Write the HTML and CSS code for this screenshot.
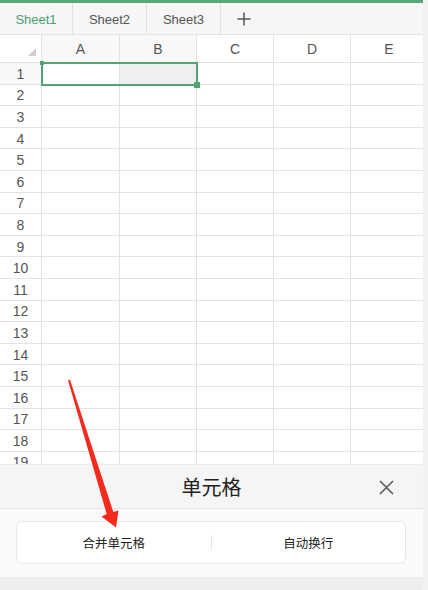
FILE: index.html
```html
<!DOCTYPE html>
<html lang="zh-CN">
<head>
<meta charset="utf-8">
<title>单元格</title>
<link rel="stylesheet" href="styles.css">
</head>
<body>
<div class="app">
  <div class="tabs">
    <div class="tab active">Sheet1</div>
    <div class="tab">Sheet2</div>
    <div class="tab">Sheet3</div>
    <div class="tab add">
      <svg width="14" height="14" viewBox="0 0 14 14"><path d="M7 0.5V13.5M0.5 7H13.5" stroke="#555" stroke-width="1.5" fill="none"/></svg>
    </div>
  </div>

  <div class="sheet">
    <div class="row head">
      <div class="corner"><span class="tri"></span></div>
      <div class="ch sel">A</div><div class="ch sel">B</div><div class="ch">C</div><div class="ch">D</div><div class="ch">E</div>
    </div>
    <div class="row"><div class="rh sel">1</div><div class="c"></div><div class="c hl"></div><div class="c"></div><div class="c"></div><div class="c"></div></div>
    <div class="row"><div class="rh">2</div><div class="c"></div><div class="c"></div><div class="c"></div><div class="c"></div><div class="c"></div></div>
    <div class="row"><div class="rh">3</div><div class="c"></div><div class="c"></div><div class="c"></div><div class="c"></div><div class="c"></div></div>
    <div class="row"><div class="rh">4</div><div class="c"></div><div class="c"></div><div class="c"></div><div class="c"></div><div class="c"></div></div>
    <div class="row"><div class="rh">5</div><div class="c"></div><div class="c"></div><div class="c"></div><div class="c"></div><div class="c"></div></div>
    <div class="row"><div class="rh">6</div><div class="c"></div><div class="c"></div><div class="c"></div><div class="c"></div><div class="c"></div></div>
    <div class="row"><div class="rh">7</div><div class="c"></div><div class="c"></div><div class="c"></div><div class="c"></div><div class="c"></div></div>
    <div class="row"><div class="rh">8</div><div class="c"></div><div class="c"></div><div class="c"></div><div class="c"></div><div class="c"></div></div>
    <div class="row"><div class="rh">9</div><div class="c"></div><div class="c"></div><div class="c"></div><div class="c"></div><div class="c"></div></div>
    <div class="row"><div class="rh">10</div><div class="c"></div><div class="c"></div><div class="c"></div><div class="c"></div><div class="c"></div></div>
    <div class="row"><div class="rh">11</div><div class="c"></div><div class="c"></div><div class="c"></div><div class="c"></div><div class="c"></div></div>
    <div class="row"><div class="rh">12</div><div class="c"></div><div class="c"></div><div class="c"></div><div class="c"></div><div class="c"></div></div>
    <div class="row"><div class="rh">13</div><div class="c"></div><div class="c"></div><div class="c"></div><div class="c"></div><div class="c"></div></div>
    <div class="row"><div class="rh">14</div><div class="c"></div><div class="c"></div><div class="c"></div><div class="c"></div><div class="c"></div></div>
    <div class="row"><div class="rh">15</div><div class="c"></div><div class="c"></div><div class="c"></div><div class="c"></div><div class="c"></div></div>
    <div class="row"><div class="rh">16</div><div class="c"></div><div class="c"></div><div class="c"></div><div class="c"></div><div class="c"></div></div>
    <div class="row"><div class="rh">17</div><div class="c"></div><div class="c"></div><div class="c"></div><div class="c"></div><div class="c"></div></div>
    <div class="row"><div class="rh">18</div><div class="c"></div><div class="c"></div><div class="c"></div><div class="c"></div><div class="c"></div></div>
    <div class="row"><div class="rh">19</div><div class="c"></div><div class="c"></div><div class="c"></div><div class="c"></div><div class="c"></div></div>

    <div class="selection"><span class="dot"></span><span class="handle"></span></div>
  </div>

  <div class="panel">
    <div class="panel-head">
      <span class="title">单元格</span>
      <span class="close">
        <svg width="15" height="15" viewBox="0 0 15 15"><path d="M1 1L14 14M14 1L1 14" stroke="#555" stroke-width="1.5" fill="none"/></svg>
      </span>
    </div>
    <div class="panel-body">
      <div class="card">
        <div class="opt">合并单元格</div>
        <div class="opt">自动换行</div>
      </div>
    </div>
    <div class="panel-foot"></div>
  </div>

  <svg class="arrow" width="428" height="590" viewBox="0 0 428 590">
    <polygon points="68,380.3 70,379.7 113.3,511.9 118.5,510.6 116,527.5 101.5,516.4 106.7,514.1" fill="#f42a1c"/>
  </svg>
</div>
</body>
</html>
```

FILE: styles.css
```css
* { box-sizing: border-box; }

html, body {
  margin: 0;
  padding: 0;
}

body {
  width: 428px;
  height: 590px;
  overflow: hidden;
  background: #f2f2f2;
  font-family: "Liberation Sans", "Noto Sans CJK SC", sans-serif;
  color: #555;
}

.app {
  position: relative;
  width: 423px;
  height: 590px;
  background: #fff;
  display: flex;
  flex-direction: column;
}

/* tabs */
.tabs {
  height: 35px;
  flex: none;
  display: flex;
  background: #f6f6f6;
  border-top: 3px solid #5aa77b;
  border-bottom: 1px solid #e4e4e4;
}

.tab {
  width: 74px;
  display: flex;
  align-items: center;
  justify-content: center;
  font-size: 13px;
  color: #555;
  border-right: 1px solid #e2e2e2;
  padding-top: 1px;
}

.tab:first-child { width: 73px; }

.tab.active { color: #4e9e72; }

.tab.add {
  width: 46px;
  border-right: none;
}

/* sheet grid */
.sheet {
  position: relative;
  height: 429px;
  flex: none;
  overflow: hidden;
  background: #fff;
}

.row {
  display: grid;
  grid-template-columns: 42px 78px 77px 77px 77px 77px;
  width: 428px;
  height: 21.6px;
}

.row.head { height: 28px; }

.row > div {
  border-right: 1px solid #e3e3e3;
  border-bottom: 1px solid #e3e3e3;
}

.corner {
  position: relative;
}

.tri {
  position: absolute;
  right: 5px;
  bottom: 6px;
  width: 8px;
  height: 8px;
  background: #cfcfcf;
  clip-path: polygon(100% 0, 100% 100%, 0 100%);
}

.ch {
  display: flex;
  align-items: center;
  justify-content: center;
  font-size: 14px;
  color: #555;
  padding-top: 1px;
}

.ch.sel { background: #f8f8f8; }

.rh {
  display: flex;
  align-items: center;
  justify-content: center;
  font-size: 14px;
  color: #555;
  padding-top: 1px;
}

.rh.sel { background: #f8f8f8; }

.c.hl { background: #efefef; }

.selection {
  position: absolute;
  left: 41px;
  top: 27px;
  width: 157px;
  height: 24px;
  border: 2px solid #52a572;
}

.selection .dot {
  position: absolute;
  left: -3px;
  top: -3px;
  width: 4px;
  height: 4px;
  background: #52a572;
}

.selection .handle {
  position: absolute;
  right: -4px;
  bottom: -4px;
  width: 6px;
  height: 6px;
  background: #52a572;
}

/* bottom panel */
.panel {
  flex: 1;
  display: flex;
  flex-direction: column;
  background: #fafafa;
}

.panel-head {
  position: relative;
  height: 45px;
  flex: none;
  display: flex;
  align-items: center;
  justify-content: center;
  background: #f5f5f5;
  border-top: 1px solid #ececec;
  border-bottom: 1px solid #e6e6e6;
}

.title {
  font-family: "Noto Sans CJK SC", sans-serif;
  font-size: 20px;
  color: #222;
}

.close {
  position: absolute;
  right: 29px;
  top: 15px;
  width: 15px;
  height: 15px;
  display: flex;
}

.panel-body {
  flex: none;
  padding: 12px 17px 13px 16px;
}

.card {
  height: 43px;
  display: flex;
  align-items: center;
  background: #fff;
  border: 1px solid #e8e8e8;
  border-radius: 6px;
}

.opt {
  flex: 1;
  text-align: center;
  font-family: "Noto Sans CJK SC", sans-serif;
  font-size: 12.5px;
  color: #222;
}

.opt + .opt {
  border-left: 1px solid #e6e6e6;
  line-height: 15px;
}

.panel-foot {
  flex: 1;
  background: #eeeeee;
}

.arrow {
  position: absolute;
  left: 0;
  top: 0;
  pointer-events: none;
}
```
